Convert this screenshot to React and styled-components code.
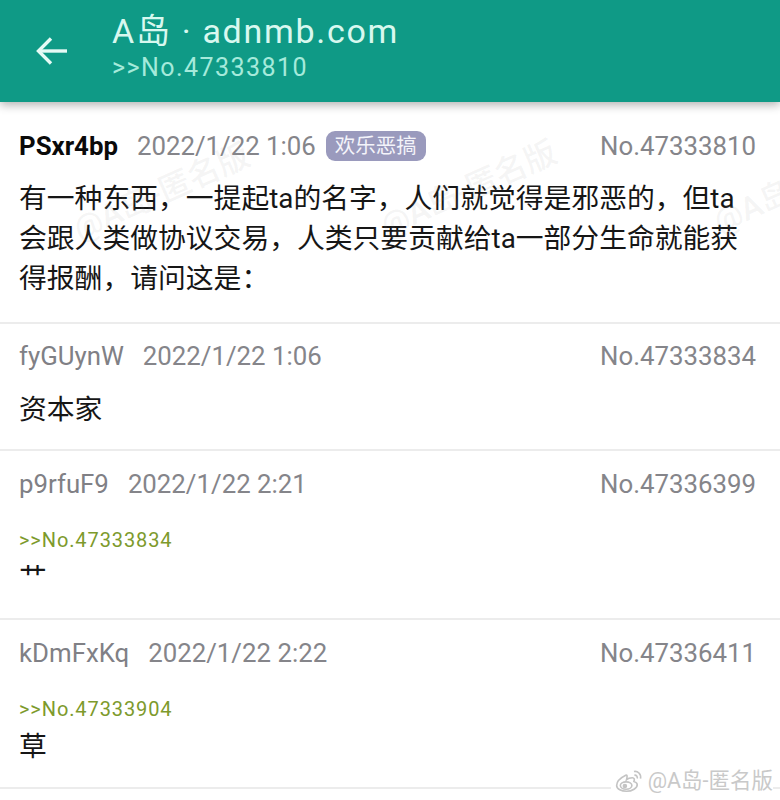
import React from "react";
import styled, { createGlobalStyle } from "styled-components";

const GlobalStyle = createGlobalStyle`
  html, body {
    margin: 0;
    padding: 0;
    background: #fff;
  }
  body {
    font-family: Roboto, "Noto Sans CJK SC", sans-serif;
  }
`;

const Page = styled.div`
  position: relative;
  width: 780px;
  height: 800px;
  overflow: hidden;
  background: #fff;
`;

const Header = styled.header`
  position: relative;
  z-index: 2;
  height: 102px;
  display: flex;
  align-items: center;
  background: #0f9a86;
  box-shadow: 0 3px 9px rgba(0, 0, 0, 0.3);
`;

const BackButton = styled.div`
  width: 112px;
  display: flex;
  justify-content: center;
  padding-right: 9px;
  box-sizing: border-box;
  color: #e6faf5;
`;

const HeaderText = styled.div`
  display: flex;
  flex-direction: column;
  margin-top: -9px;
`;

const Title = styled.div`
  margin-top: -1px;
  margin-bottom: 1px;
  font-size: 34px;
  line-height: 42px;
  letter-spacing: 1.7px;
  color: #d8f8ef;
`;

const Subtitle = styled.div`
  font-size: 25px;
  line-height: 30px;
  letter-spacing: 1.45px;
  color: #a5eadb;
`;

const Post = styled.article`
  height: ${(p) => p.$height}px;
  box-sizing: border-box;
  padding: ${(p) => p.$top}px 24px 0 19px;
  border-bottom: 2px solid #ececec;
`;

const Meta = styled.div`
  display: flex;
  align-items: center;
  height: 32px;
  font-size: 25.8px;
  color: #85858a;
`;

const Uid = styled.span`
  margin-right: 19px;
  color: ${(p) => (p.$main ? "#0a0a0a" : "#808085")};
  font-weight: ${(p) => (p.$main ? 700 : 400)};
`;

const Tag = styled.span`
  margin-left: 10px;
  padding: 0 9px;
  height: 30px;
  line-height: 30px;
  border-radius: 9px;
  background: #9a9abd;
  color: #f4f4fa;
  font-size: 20.5px;
`;

const PostNo = styled.span`
  margin-left: auto;
`;

const Body = styled.div`
  margin-top: ${(p) => p.$gap}px;
  font-size: 27.8px;
  line-height: 40px;
  color: #161616;
`;

const Quote = styled.div`
  margin-top: 27px;
  font-size: 20px;
  line-height: 26px;
  letter-spacing: 0.9px;
  color: #7d9a2c;
`;

const Watermark = styled.div`
  position: absolute;
  left: ${(p) => p.$x}px;
  top: ${(p) => p.$y}px;
  transform: rotate(-24deg);
  font-size: 32px;
  font-weight: 500;
  color: rgba(150, 150, 150, 0.1);
  white-space: nowrap;
  pointer-events: none;
`;

const Credit = styled.div`
  position: absolute;
  right: 7px;
  bottom: 5px;
  display: flex;
  align-items: center;
  gap: 5px;
  padding-left: 4px;
  background: #fff;
  font-size: 21.500px;
  line-height: 28px;
  color: #c9c9c9;
`;

const WeiboLogo = () => (
  <svg width="28" height="24" viewBox="0 0 34 28" fill="none" stroke="#c4c4c4" strokeWidth="2">
    <path d="M13 7C7 10 2 15 2 19.500C2 24 8 26.500 14 26.500C21 26.500 27 22.500 27 18.500C27 16 24.500 15 23 14.500C24 12 23.500 10 21 10C18 10 15 11.500 14 12.500C15 9 15 6 13 7Z" />
    <ellipse cx="13.500" cy="19.500" rx="7" ry="4.500" />
    <circle cx="12" cy="20" r="1.800" fill="#c4c4c4" />
    <path d="M23 2.500C27.500 1.500 32 5.500 31 11" />
    <path d="M23.500 7C26 6.500 27.500 8.500 27 11" />
  </svg>
);

const posts = [
  {
    uid: "fyGUynW",
    time: "2022/1/22 1:06",
    no: "No.47333834",
    body: "资本家",
    height: 127,
    top: 16,
  },
  {
    uid: "p9rfuF9",
    time: "2022/1/22 2:21",
    no: "No.47336399",
    quote: ">>No.47333834",
    body: "艹",
    height: 169,
    top: 17,
  },
  {
    uid: "kDmFxKq",
    time: "2022/1/22 2:22",
    no: "No.47336411",
    quote: ">>No.47333904",
    body: "草",
    height: 169,
    top: 17,
  },
];

const marks = [
  { x: 66, y: 166, text: "@A岛-匿名版" },
  { x: 373, y: 163, text: "@A岛-匿名版" },
  { x: 706, y: 159, text: "@A岛-匿名版" },
];

function App() {
  return (
    <Page>
      <GlobalStyle />
      <Header>
        <BackButton>
          <svg width="34" height="30" viewBox="0 0 34 30" fill="none" stroke="currentColor" strokeWidth="3.400">
            <path d="M32 15H4" />
            <path d="M16 2.500L3.500 15L16 27.500" />
          </svg>
        </BackButton>
        <HeaderText>
          <Title>A岛 · adnmb.com</Title>
          <Subtitle>&gt;&gt;No.47333810</Subtitle>
        </HeaderText>
      </Header>

      <Post $height={222} $top={28}>
        <Meta>
          <Uid $main>PSxr4bp</Uid>
          2022/1/22 1:06
          <Tag>欢乐恶搞</Tag>
          <PostNo>No.47333810</PostNo>
        </Meta>
        <Body $gap={17}>
          有一种东西，一提起ta的名字，人们就觉得是邪恶的，但ta
          <br />
          会跟人类做协议交易，人类只要贡献给ta一部分生命就能获
          <br />
          得报酬，请问这是：
        </Body>
      </Post>

      {posts.map((post) => (
        <Post key={post.no} $height={post.height} $top={post.top}>
          <Meta>
            <Uid>{post.uid}</Uid>
            {post.time}
            <PostNo>{post.no}</PostNo>
          </Meta>
          {post.quote && <Quote>{post.quote}</Quote>}
          <Body $gap={post.quote ? 5 : 18}>{post.body}</Body>
        </Post>
      ))}

      {marks.map((mark) => (
        <Watermark key={mark.x} $x={mark.x} $y={mark.y}>
          {mark.text}
        </Watermark>
      ))}

      <Credit>
        <WeiboLogo />
        @A岛-匿名版
      </Credit>
    </Page>
  );
}

export default App;
